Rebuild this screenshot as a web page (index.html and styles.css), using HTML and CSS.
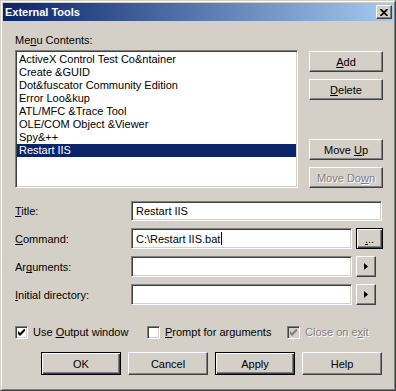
FILE: index.html
```html
<!DOCTYPE html>
<html lang="en">
<head>
    <meta charset="UTF-8">
    <title>External Tools</title>
    <link rel="stylesheet" href="styles.css">
</head>
<body>
    <div class="window">
        <div class="frame">
            <div class="titlebar">
                <span class="title">External Tools</span>
                <button class="close-btn" aria-label="Close">
                    <svg viewBox="0 0 8 7" width="8" height="7">
                        <path d="M0.5 0 L7.5 7 M7.5 0 L0.5 7" stroke="#000" stroke-width="1.8"/>
                    </svg>
                </button>
            </div>

            <div class="content">
                <div class="menu-label">Me<u>n</u>u Contents:</div>

                <div class="list-row">
                    <ul class="listbox">
                        <li>ActiveX Control Test Co&amp;ntainer</li>
                        <li>Create &amp;GUID</li>
                        <li>Dot&amp;fuscator Community Edition</li>
                        <li>Error Loo&amp;kup</li>
                        <li>ATL/MFC &amp;Trace Tool</li>
                        <li>OLE/COM Object &amp;Viewer</li>
                        <li>Spy&amp;++</li>
                        <li class="selected">Restart IIS</li>
                    </ul>
                    <div class="side-buttons">
                        <button class="btn"><span><u>A</u>dd</span></button>
                        <button class="btn"><span><u>D</u>elete</span></button>
                        <button class="btn push-down"><span>Move <u>U</u>p</span></button>
                        <button class="btn disabled"><span>Move Do<u>w</u>n</span></button>
                    </div>
                </div>

                <div class="fields">
                    <div class="field">
                        <label class="field-label"><u>T</u>itle:</label>
                        <div class="textbox wide short"><span>Restart IIS</span></div>
                    </div>
                    <div class="field">
                        <label class="field-label"><u>C</u>ommand:</label>
                        <div class="textbox"><span>C:\Restart IIS.bat</span><span class="caret"></span></div>
                        <button class="btn default browse"><span><u>.</u>..</span></button>
                    </div>
                    <div class="field">
                        <label class="field-label">Ar<u>g</u>uments:</label>
                        <div class="textbox"></div>
                        <button class="btn arrow">
                            <svg viewBox="0 0 4 7" width="4" height="7"><polygon points="0,0 4,3.5 0,7" fill="#000"/></svg>
                        </button>
                    </div>
                    <div class="field">
                        <label class="field-label"><u>I</u>nitial directory:</label>
                        <div class="textbox"></div>
                        <button class="btn arrow">
                            <svg viewBox="0 0 4 7" width="4" height="7"><polygon points="0,0 4,3.5 0,7" fill="#000"/></svg>
                        </button>
                    </div>
                </div>

                <div class="checks">
                    <div class="check">
                        <span class="box">
                            <svg viewBox="0 0 7 7" width="7" height="7"><polygon points="0,2 2,4 6,0 7,0 7,2 2,7 0,5" fill="#000"/></svg>
                        </span>
                        <span>Use <u>O</u>utput window</span>
                    </div>
                    <div class="check">
                        <span class="box"></span>
                        <span><u>P</u>rompt for arguments</span>
                    </div>
                    <div class="check disabled">
                        <span class="box">
                            <svg viewBox="0 0 7 7" width="7" height="7"><polygon points="0,2 2,4 6,0 7,0 7,2 2,7 0,5" fill="#808080"/></svg>
                        </span>
                        <span>Close on e<u>x</u>it</span>
                    </div>
                </div>

                <div class="actions">
                    <button class="btn big default">OK</button>
                    <button class="btn big">Cancel</button>
                    <button class="btn big default">Apply</button>
                    <button class="btn big">Help</button>
                </div>
            </div>
        </div>
    </div>
</body>
</html>
```

FILE: styles.css
```css
* {
    margin: 0;
    padding: 0;
    box-sizing: border-box;
}

body {
    background: #d4d0c8;
    font-family: 'Liberation Sans', Arial, sans-serif;
    font-size: 11px;
    color: #000;
}

u {
    text-decoration-skip-ink: none;
}

/* Window frame */
.window {
    width: 396px;
    height: 391px;
    border: 1px solid;
    border-color: #d4d0c8 #404040 #404040 #d4d0c8;
}

.frame {
    height: 100%;
    border: 1px solid;
    border-color: #fff #808080 #808080 #fff;
    padding: 1px;
}

.titlebar {
    height: 18px;
    display: flex;
    align-items: center;
    justify-content: space-between;
    padding: 0 1px 0 2px;
    background: linear-gradient(to right, #0a246a, #a6caf0);
}

.title {
    color: #fff;
    font-weight: bold;
}

.close-btn {
    width: 16px;
    height: 14px;
    display: flex;
    align-items: center;
    justify-content: center;
    background: #d4d0c8;
    border: 1px solid;
    border-color: #fff #404040 #404040 #fff;
    box-shadow: inset -1px -1px #808080;
}

/* Body */
.content {
    padding: 13px 10px 0 12px;
}

.menu-label {
    line-height: 13px;
    margin-bottom: 3px;
}

.list-row {
    display: flex;
    gap: 11px;
}

.listbox,
.textbox,
.box {
    background: #fff;
    border: 1px solid;
    border-color: #808080 #fff #fff #808080;
    box-shadow: inset 1px 1px #404040, inset -1px -1px #d4d0c8;
}

.listbox {
    list-style: none;
    width: 283px;
    height: 138px;
    padding: 2px 1px 1px 1px;
}

.listbox li {
    height: 13px;
    line-height: 13px;
    padding-left: 2px;
    white-space: nowrap;
}

.listbox li.selected {
    background: #0a246a;
    color: #fff;
}

.side-buttons {
    width: 74px;
    display: flex;
    flex-direction: column;
    gap: 7px;
    padding-top: 1px;
}

/* Buttons */
.btn {
    font: inherit;
    color: #000;
    height: 21px;
    background: #d4d0c8;
    border: 1px solid;
    border-color: #fff #404040 #404040 #fff;
    box-shadow: inset -1px -1px #808080;
    display: flex;
    align-items: center;
    justify-content: center;
    white-space: nowrap;
}

.btn.default {
    border: 1px solid #000;
    box-shadow: inset 1px 1px #fff, inset -1px -1px #404040, inset -2px -2px #808080;
}

.btn.disabled {
    color: #808080;
    text-shadow: 1px 1px #fff;
}

.push-down {
    margin-top: auto;
}

/* Fields */
.fields {
    margin-top: 13px;
    display: flex;
    flex-direction: column;
    gap: 7px;
}

.field {
    display: flex;
    align-items: center;
}

.field-label {
    width: 116px;
    flex-shrink: 0;
}

.textbox {
    width: 221px;
    height: 21px;
    padding: 0 4px;
    display: flex;
    align-items: center;
    white-space: nowrap;
}

.textbox.wide {
    width: 251px;
}

.textbox.short {
    height: 20px;
}

.caret {
    display: inline-block;
    width: 1px;
    height: 13px;
    margin-left: 1px;
    background: #000;
}

.browse {
    width: 27px;
    margin-left: 4px;
}

.arrow {
    width: 20px;
    margin-left: 4px;
}

/* Checkboxes */
.checks {
    margin-top: 21px;
    display: grid;
    grid-template-columns: 132px 140px auto;
    line-height: 13px;
}

.check {
    display: flex;
    align-items: center;
    gap: 5px;
    white-space: nowrap;
}

.box {
    width: 13px;
    height: 13px;
    display: flex;
    align-items: center;
    justify-content: center;
}

.check.disabled {
    color: #808080;
    text-shadow: 1px 1px #fff;
}

.check.disabled .box {
    background: #d4d0c8;
}

/* Bottom buttons */
.actions {
    margin-top: 13px;
    padding-left: 26px;
    display: flex;
    gap: 7px;
}

.btn.big {
    width: 80px;
    height: 23px;
}
```
